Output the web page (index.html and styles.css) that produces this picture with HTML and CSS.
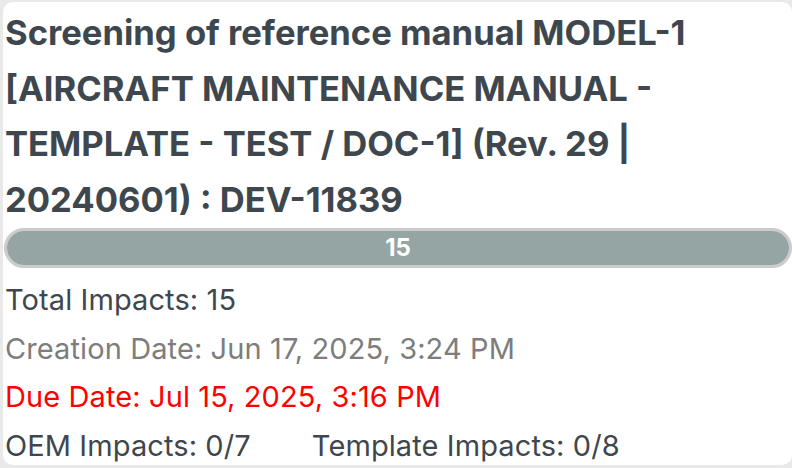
FILE: index.html
```html
<!DOCTYPE html>
<html>
<head>
<meta charset="utf-8">
<link rel="stylesheet" href="styles.css">
</head>
<body>
<div class="card">
  <h1 class="title">Screening of reference manual MODEL-1<br>[AIRCRAFT MAINTENANCE MANUAL -<br>TEMPLATE - TEST / DOC-1] (Rev. 29 |<br>20240601) : DEV-11839</h1>
  <div class="bar"><div class="fill" style="width:100%">15</div></div>
  <div class="info">
    <div class="row">Total Impacts: 15</div>
    <div class="row muted">Creation Date: Jun 17, 2025, 3:24 PM</div>
    <div class="row due">Due Date: Jul 15, 2025, 3:16 PM</div>
    <div class="row split"><span>OEM Impacts: 0/7</span><span>Template Impacts: 0/8</span></div>
  </div>
</div>
</body>
</html>
```

FILE: styles.css
```css
html, body {
  margin: 0;
  padding: 0;
  background: #e9e9e9;
  height: 100%;
  overflow: hidden;
}
.card {
  margin: 2px 0 0 3px;
  height: 463px;
  background: #fff;
  border-radius: 10px;
  padding: 0 0 0 2px;
  font-family: Inter, sans-serif;
  color: #3e474e;
  box-sizing: border-box;
}
.title {
  margin: 0;
  padding-top: 3px;
  font-size: 34.6px;
  line-height: 55.5px;
  font-weight: 700;
  color: #3e474e;
  white-space: nowrap;
}
.bar {
  margin: 1px 0 0 -1px;
  height: 40px;
  border: 3px solid #cbcbcb;
  border-radius: 20px;
  box-sizing: border-box;
  overflow: hidden;
  background: #cbcbcb;
}
.fill {
  height: 100%;
  background: #94a5a4;
  border-radius: 17px;
  color: #fff;
  font-weight: 700;
  font-size: 24px;
  line-height: 34px;
  text-align: center;
}
.info {
  padding-top: 8px;
}
.row {
  font-size: 29px;
  line-height: 48.7px;
  letter-spacing: 0.1px;
}
.muted { color: #7d7d7d; }
.due { color: #ff0000; }
.split {
  display: flex;
  gap: 61px;
}
```
